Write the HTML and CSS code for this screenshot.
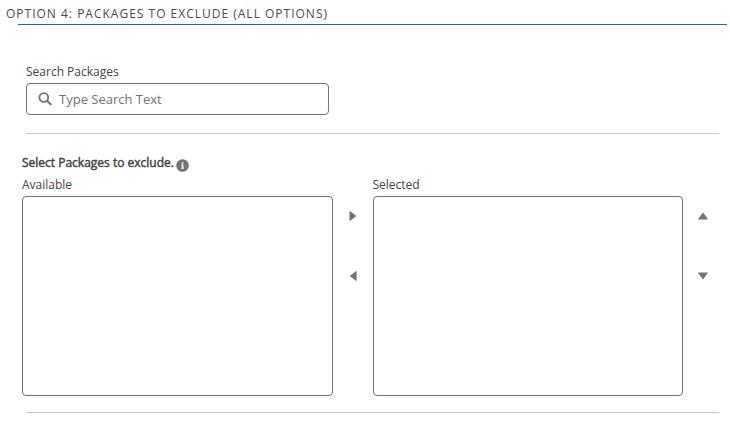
FILE: index.html
```html
<!DOCTYPE html>
<html lang="en">
<head>
<meta charset="utf-8">
<title>Packages to exclude</title>
<link rel="stylesheet" href="styles.css">
</head>
<body>
<h2 class="title">OPTION 4: PACKAGES TO EXCLUDE (ALL OPTIONS)</h2>
<div class="rule"></div>
<section class="search">
  <label class="label" for="q">Search Packages</label>
  <div class="field">
    <svg class="glass" viewBox="0 0 14 14"><circle cx="5.8" cy="5.5" r="4.4" fill="none" stroke="currentColor" stroke-width="1.8"/><path d="M9.2 8.9L12.7 12.2" stroke="currentColor" stroke-width="2.1" stroke-linecap="round"/></svg>
    <input id="q" class="input" type="text" placeholder="Type Search Text">
  </div>
</section>
<section class="picker">
  <div class="heading"><span class="strong">Select Packages to exclude.</span>
    <svg class="info" viewBox="0 0 13 13"><circle cx="6.5" cy="6.5" r="6.3" fill="currentColor"/><path d="M5.7 3.2h1.7v1.6H5.7zM5.1 5.5h2.3v3.2h.7v1H5v-1h.8V6.4h-.7z" fill="#fff"/></svg>
  </div>
  <div class="lists">
    <div class="column"><div class="label">Available</div><div class="box"></div></div>
    <div class="arrows">
      <svg viewBox="0 0 12 12"><path d="M2.5 .8L9.4 6L2.5 11.2Z"/></svg>
      <svg viewBox="0 0 12 12"><path d="M9.6 .8L2.7 6L9.6 11.2Z"/></svg>
    </div>
    <div class="column selected"><div class="label">Selected</div><div class="box"></div></div>
    <div class="arrows">
      <svg viewBox="0 0 12 12"><path d="M.8 9.5L6 2.6L11.2 9.5Z"/></svg>
      <svg viewBox="0 0 12 12"><path d="M.8 2.5L6 9.4L11.2 2.5Z"/></svg>
    </div>
  </div>
</section>
</body>
</html>
```
FILE: styles.css
```css
* { box-sizing: border-box; }
body { margin: 0; height: 421px; overflow: hidden; background: #fff; color: #444; font-family: "Open Sans", sans-serif; font-size: 12px; }
.title { margin: 0; padding: 4px 0 0 6px; height: 24px; font-size: 12px; line-height: 19px; font-weight: 400; letter-spacing: 1px; white-space: nowrap; color: #4c4c4c; }
.rule { height: 1px; margin: 0 3px 0 18px; background: #1f5fe0; }
.search { height: 109px; margin: 0 11px 0 26px; padding-top: 38px; border-bottom: 1px solid #c9c9c9; }
.label { display: block; height: 20px; line-height: 18px; }
.field { display: flex; align-items: center; width: 303px; height: 32px; padding-left: 11px; gap: 7px; border: 1px solid #747474; border-radius: 4px; color: #747474; }
.glass { width: 14px; height: 14px; }
.input { width: 240px; padding: 0; border: 0; outline: 0; background: none; font: 13px/20px "Open Sans", sans-serif; color: #444; }
.input::placeholder { color: #747474; opacity: 1; }
.picker { padding: 19px 0 0 22px; }
.picker::after { content: ""; display: block; height: 1px; margin: 16px 11px 0 4px; background: #c9c9c9; }
.heading { display: flex; height: 23px; line-height: 20px; }
.strong { width: 153.5px; white-space: nowrap; -webkit-text-stroke: .45px currentColor; }
.info { width: 13px; height: 13px; margin-top: 6px; color: #747474; }
.lists { display: flex; }
.column { width: 311px; }
.selected { width: 310px; }
.selected .label { margin-left: -.5px; }
.box { height: 200px; border: 1px solid #747474; border-radius: 4px; }
.arrows { display: flex; flex-direction: column; align-items: center; gap: 48px; width: 40px; padding-top: 34px; }
.arrows svg { width: 12px; height: 12px; fill: #747474; }
```
